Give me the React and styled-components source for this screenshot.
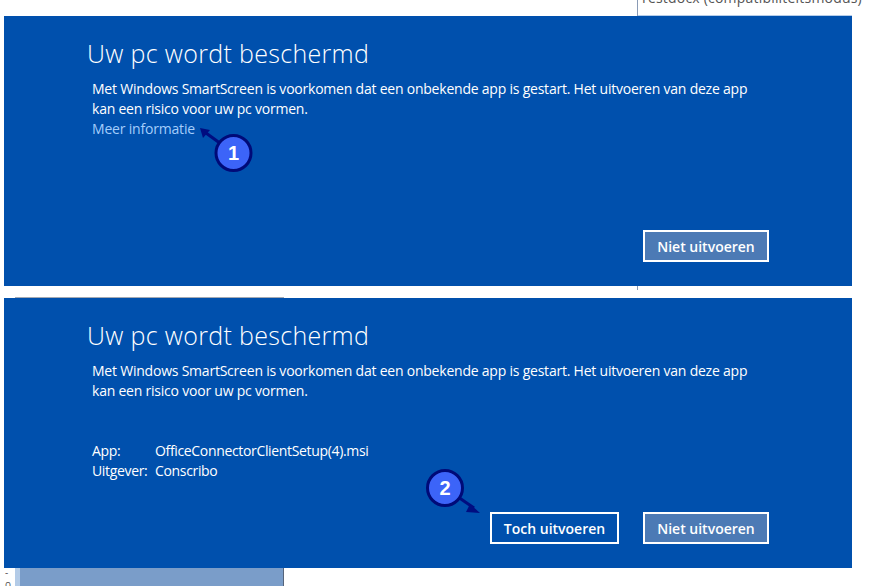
import styled, { createGlobalStyle } from "styled-components";

const GlobalStyle = createGlobalStyle`
  html, body {
    margin: 0;
    padding: 0;
    background: #fff;
    overflow: hidden;
  }
`;

const Page = styled.div`
  position: relative;
  width: 870px;
  height: 586px;
  overflow: hidden;
  padding: 16px 0 0 4px;
  box-sizing: border-box;
  display: flex;
  flex-direction: column;
  gap: 12px;
  font-family: "Open Sans", "Noto Sans", sans-serif;
  color: #fff;
`;

const Panel = styled.section`
  position: relative;
  z-index: 1;
  width: 848px;
  height: 270px;
  box-sizing: border-box;
  padding: 19px 83px 24px;
  background: #0050ad;
  display: flex;
  flex-direction: column;
`;

const Title = styled.h1`
  margin: 0 0 8px;
  font-size: 25px;
  line-height: 36px;
  font-weight: 300;
  letter-spacing: 0.33px;
`;

const Body = styled.div`
  padding-left: 5px;
  font-size: 14px;
  line-height: 20px;
`;

const Paragraph = styled.p`
  margin: 0;
  letter-spacing: -0.22px;
`;

const MoreLink = styled.a`
  display: block;
  color: #a4cdfb;
  letter-spacing: -0.19px;
`;

const Details = styled.dl`
  margin: 40px 0 0;
  display: grid;
  grid-template-columns: 63px auto;
  justify-content: start;
  letter-spacing: -0.34px;
`;

const Term = styled.dt`
  margin: 0;
`;

const Value = styled.dd`
  margin: 0;
`;

const Actions = styled.div`
  margin-top: auto;
  display: flex;
  justify-content: flex-end;
  gap: 24px;
`;

const Button = styled.button`
  width: ${(props) => (props.$wide ? "129px" : "126px")};
  height: 32px;
  padding: 0;
  box-sizing: border-box;
  border: 2px solid #fff;
  background: ${(props) => (props.$muted ? "#4c7ab5" : "transparent")};
  color: #fff;
  font-family: "Open Sans", "Noto Sans", sans-serif;
  font-size: 14px;
  font-weight: 600;
  letter-spacing: 0;
`;

const CalloutSvg = styled.svg`
  position: absolute;
  left: ${(props) => props.$left}px;
  top: ${(props) => props.$top}px;
  width: ${(props) => props.$w}px;
  height: ${(props) => props.$h}px;
`;

const CalloutNumber = styled.text`
  font-family: "Liberation Sans", Arial, sans-serif;
  font-size: 20px;
  font-weight: 700;
  fill: #fff;
  text-anchor: middle;
`;

const DocTitle = styled.div`
  position: absolute;
  left: 640px;
  top: -11px;
  font-size: 14px;
  line-height: 18px;
  color: #555;
  white-space: nowrap;
  letter-spacing: 0.2px;
`;

const WindowEdge = styled.div`
  position: absolute;
  left: 637px;
  top: 0;
  width: 1px;
  height: 290px;
  background: #8a9bb5;
`;

const TitleRule = styled.div`
  position: absolute;
  left: 638px;
  top: 15px;
  width: 214px;
  height: 1px;
  background: #b5cdea;
`;

const BackRule = styled.div`
  position: absolute;
  left: 15px;
  top: 297px;
  width: 269px;
  height: 1px;
  background: #a3a9b3;
`;

const BackPane = styled.div`
  position: absolute;
  left: 15px;
  top: 568px;
  width: 269px;
  height: 18px;
  box-sizing: border-box;
  background: #7a9dc9;
  border-left: 5px solid #b3cbe7;
  border-right: 1px solid #56647a;
`;

const Scrap = styled.div`
  position: absolute;
  left: 5px;
  top: 566px;
  font-size: 10px;
  line-height: 12px;
  color: #555;
`;

const Callout = ({ left, top, w, h, cx, cy, x2, y2, head, number }) => (
  <CalloutSvg $left={left} $top={top} $w={w} $h={h} viewBox={`0 0 ${w} ${h}`}>
    <line x1={cx} y1={cy} x2={x2} y2={y2} stroke="#000d80" strokeWidth="3" />
    <polygon points={head} fill="#000d80" />
    <circle cx={cx} cy={cy} r="17.5" fill="#3c64f8" stroke="#000a78" strokeWidth="3" />
    <CalloutNumber x={cx} y={cy + 7}>
      {number}
    </CalloutNumber>
  </CalloutSvg>
);

const App = () => (
  <Page>
    <GlobalStyle />
    <DocTitle>Testdocx (compatibiliteitsmodus)</DocTitle>
    <WindowEdge />
    <TitleRule />
    <BackRule />
    <BackPane />
    <Scrap>
      -
      <br />o
    </Scrap>

    <Panel>
      <Title>Uw pc wordt beschermd</Title>
      <Body>
        <Paragraph>
          Met Windows SmartScreen is voorkomen dat een onbekende app is gestart. Het uitvoeren van deze app
          <br />
          kan een risico voor uw pc vormen.
        </Paragraph>
        <MoreLink>Meer informatie</MoreLink>
      </Body>
      <Actions>
        <Button $muted>Niet uitvoeren</Button>
      </Actions>
      <Callout
        left={190}
        top={105}
        w={62}
        h={56}
        cx={39.5}
        cy={32}
        x2={12}
        y2={12}
        head="6,7 16,9 9,17"
        number="1"
      />
    </Panel>

    <Panel>
      <Title>Uw pc wordt beschermd</Title>
      <Body>
        <Paragraph>
          Met Windows SmartScreen is voorkomen dat een onbekende app is gestart. Het uitvoeren van deze app
          <br />
          kan een risico voor uw pc vormen.
        </Paragraph>
        <Details>
          <Term>App:</Term>
          <Value>OfficeConnectorClientSetup(4).msi</Value>
          <Term>Uitgever:</Term>
          <Value>Conscribo</Value>
        </Details>
      </Body>
      <Actions>
        <Button $wide>Toch uitvoeren</Button>
        <Button $muted>Niet uitvoeren</Button>
      </Actions>
      <Callout
        left={420}
        top={170}
        w={64}
        h={50}
        cx={21}
        cy={20}
        x2={50}
        y2={40}
        head="56,45 46,36 42,44"
        number="2"
      />
    </Panel>
  </Page>
);

export default App;
